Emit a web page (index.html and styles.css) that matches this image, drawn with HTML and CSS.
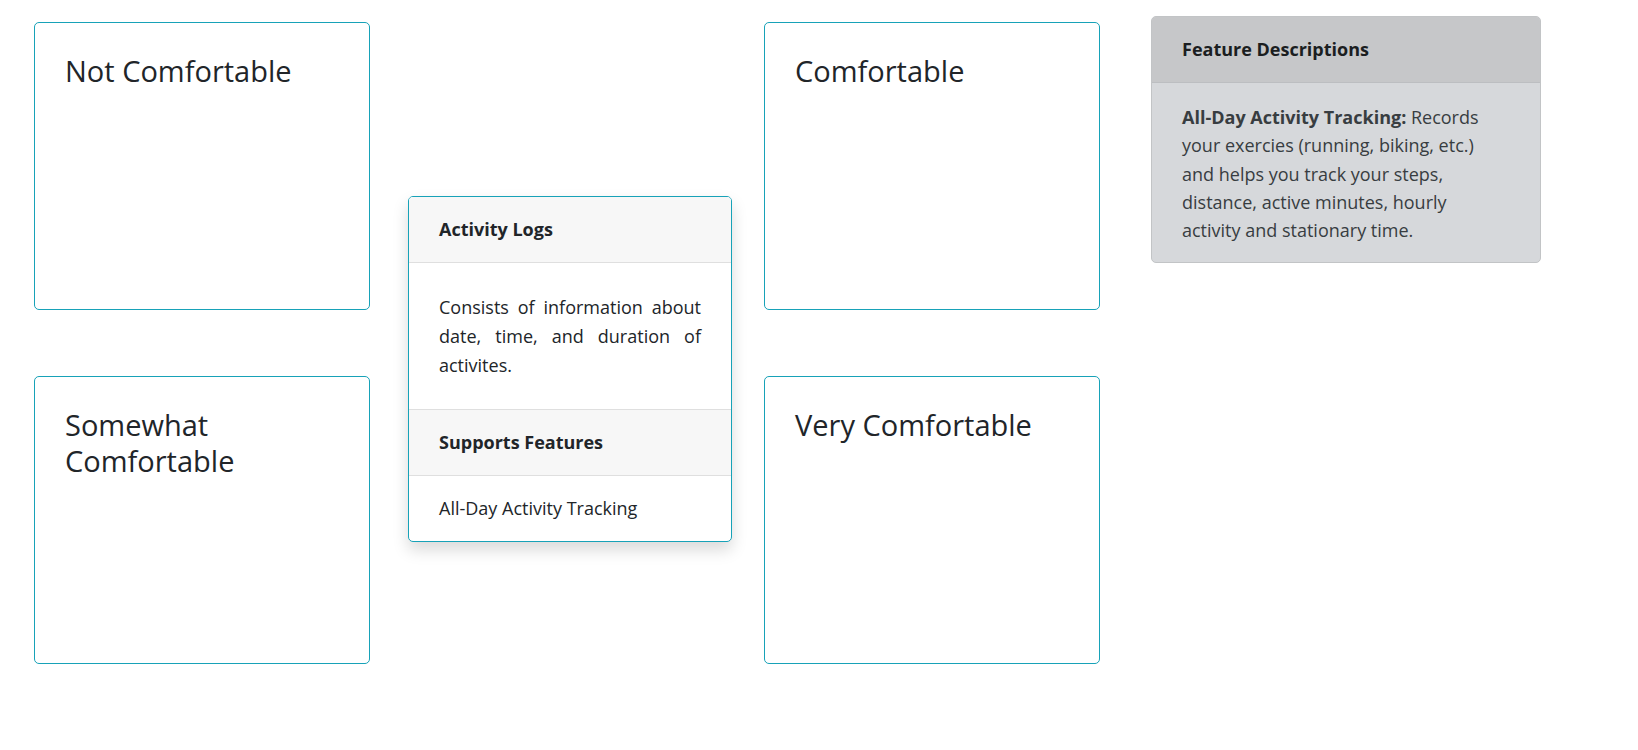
FILE: index.html
```html
<!DOCTYPE html>
<html>
<head>
  <title>Comfort Sorting</title>
  <link rel="stylesheet" href="styles.css">
</head>
<body>
  <div class="board">
    <div class="zone-column">
      <div class="zone">
        <h3 class="zone-title">Not Comfortable</h3>
      </div>
      <div class="zone">
        <h3 class="zone-title">Somewhat Comfortable</h3>
      </div>
    </div>

    <div class="detail-column">
      <div class="detail-card">
        <div class="detail-header">Activity Logs</div>
        <div class="detail-body">
          <p>Consists of information about date, time, and duration of activites.</p>
        </div>
        <div class="detail-header detail-subheader">Supports Features</div>
        <div class="detail-item">All-Day Activity Tracking</div>
      </div>
    </div>

    <div class="zone-column zone-column-right">
      <div class="zone">
        <h3 class="zone-title">Comfortable</h3>
      </div>
      <div class="zone">
        <h3 class="zone-title">Very Comfortable</h3>
      </div>
    </div>

    <div class="feature-card">
      <div class="feature-header">Feature Descriptions</div>
      <div class="feature-body">
        <p><strong>All-Day Activity Tracking:</strong> Records your exercies (running, biking, etc.) and helps you track your steps, distance, active minutes, hourly activity and stationary time.</p>
      </div>
    </div>
  </div>
</body>
</html>
```

FILE: styles.css
```css
body {
  font-family: 'Open Sans', sans-serif;
  font-size: 18px;
  line-height: 1.5;
  margin: 0;
  color: #212529;
  background-color: #fff;
}

p {
  margin: 0;
}

.board {
  display: flex;
  align-items: flex-start;
  padding-left: 34px;
}

.zone-column {
  display: flex;
  flex-direction: column;
  gap: 66px;
  width: 336px;
  margin-top: 22px;
}

.zone-column-right {
  margin-left: 32px;
}

.zone {
  box-sizing: border-box;
  height: 288px;
  padding: 30px;
  border: 1px solid #17a2b8;
  border-radius: 5px;
}

.zone-title {
  margin: 0;
  font-size: 29px;
  font-weight: 400;
  line-height: 36px;
}

.detail-column {
  margin-left: 38px;
  margin-top: 196px;
}

.detail-card {
  width: 324px;
  box-sizing: border-box;
  border: 1px solid #17a2b8;
  border-radius: 5px;
  background-color: #fff;
  box-shadow: 0 8px 16px rgba(0, 0, 0, 0.15);
  overflow: hidden;
}

.detail-header {
  padding: 19px 30px;
  font-weight: bold;
  background-color: #f7f7f7;
  border-bottom: 1px solid #dfdfdf;
}

.detail-subheader {
  border-top: 1px solid #dfdfdf;
}

.detail-body {
  padding: 30px;
  line-height: 1.6;
  text-align: justify;
}

.detail-item {
  padding: 19px 30px;
}

.feature-card {
  width: 390px;
  box-sizing: border-box;
  margin-left: 51px;
  margin-top: 16px;
  border: 1px solid #c2c4c6;
  border-radius: 5px;
  background-color: #d6d8db;
  color: #383d41;
  overflow: hidden;
}

.feature-header {
  padding: 19px 30px;
  font-weight: bold;
  color: #1b1e21;
  background-color: #c6c7c9;
  border-bottom: 1px solid #bcbec1;
}

.feature-body {
  padding: 20px 36px 17px 30px;
  line-height: 1.575;
}

.feature-body strong {
  color: #383d41;
}
```
